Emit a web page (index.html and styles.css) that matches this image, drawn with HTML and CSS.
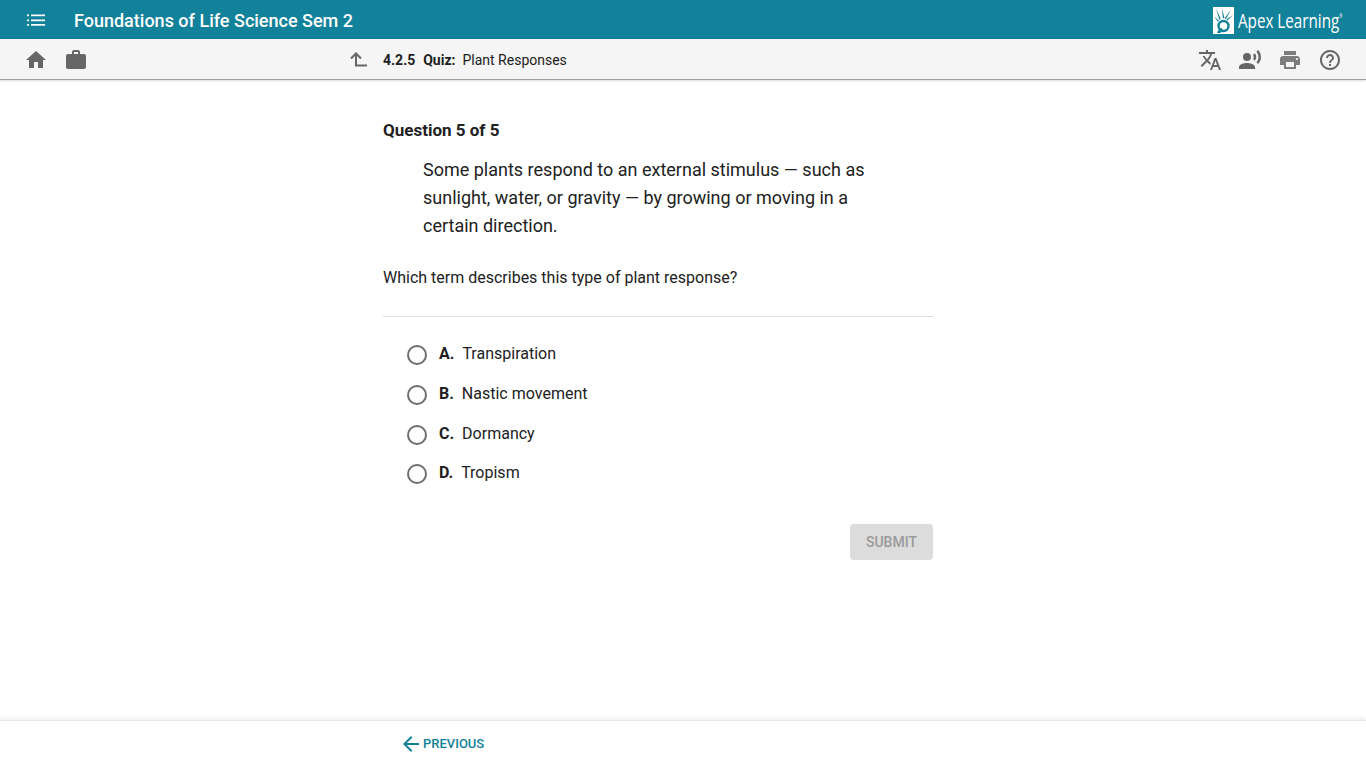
FILE: index.html
```html
<!DOCTYPE html>
<html lang="en">
<head>
  <meta charset="UTF-8" />
  <title>Plant Responses</title>
  <link rel="stylesheet" href="styles.css">
</head>
<body>

  <header class="top-bar">
    <button class="menu-btn" aria-label="Menu">
      <svg width="20" height="20" viewBox="0 0 20 20" fill="#fff">
        <rect x="1" y="4.500" width="2" height="1.700"/><rect x="5" y="4.500" width="14" height="1.700"/>
        <rect x="1" y="9.500" width="2" height="1.700"/><rect x="5" y="9.500" width="14" height="1.700"/>
        <rect x="1" y="14" width="2" height="1.700"/><rect x="5" y="14" width="14" height="1.700"/>
      </svg>
    </button>
    <div class="course-title">Foundations of Life Science Sem 2</div>
    <div class="logo">
      <svg class="logo-mark" width="21" height="27" viewBox="0 0 21 27">
        <rect width="21" height="27" fill="#fff"/>
        <g fill="#12819a">
          <path d="M3 1.500l4.800 10.500-1.500.7z"/>
          <path d="M9 1l2.400 10-1.600.3z"/>
          <path d="M18 2.500l-5 9.500-1.300-.8z"/>
          <path d="M20 8l-5.500 5.500-1-1.200z"/>
          <path d="M1 9.500l5 4-1 1.200z"/>
        </g>
        <circle cx="10.500" cy="19" r="5" fill="none" stroke="#12819a" stroke-width="2.400"/>
        <path d="M4 26c1-3 2.500-4.500 4.500-5l1.500 2-2.500 3z" fill="#12819a"/>
      </svg>
      <span class="logo-text">Apex Learning<sup class="logo-reg">®</sup></span>
    </div>
  </header>

  <nav class="tool-bar">
    <div class="tool-group">
      <a class="tool-icon"><svg width="24" height="24" viewBox="0 0 24 24"><path d="M10 20v-6h4v6h5v-8h3L12 3 2 12h3v8z"/></svg></a>
      <a class="tool-icon"><svg width="24" height="24" viewBox="0 0 24 24"><path d="M20 6h-4V4c0-1.11-.89-2-2-2h-4c-1.11 0-2 .89-2 2v2H4c-1.11 0-1.99.89-1.99 2L2 19c0 1.11.89 2 2 2h16c1.11 0 2-.89 2-2V8c0-1.11-.89-2-2-2zm-6 0h-4V4h4v2z"/></svg></a>
    </div>
    <div class="crumb">
      <svg class="up-icon" width="20" height="20" viewBox="0 0 20 20" fill="none" stroke="#666" stroke-width="2"><path d="M2 8.500L7 3.500l5 5"/><path d="M7 3.500v12h11"/></svg>
      <b>4.2.5</b>
      <b>Quiz:</b>
      <span>Plant Responses</span>
    </div>
    <div class="tool-group">
      <a class="tool-icon"><svg width="24" height="24" viewBox="0 0 24 24"><path d="M12.87 15.07l-2.54-2.51.03-.03c1.74-1.94 2.98-4.17 3.71-6.53H17V4h-7V2H8v2H1v1.99h11.17C11.5 7.92 10.44 9.75 9 11.35 8.07 10.32 7.3 9.19 6.69 8h-2c.73 1.63 1.73 3.17 2.98 4.56l-5.09 5.02L4 19l5-5 3.11 3.11.76-2.04zM18.5 10h-2L12 22h2l1.12-3h4.75L21 22h2l-4.5-12zm-2.62 7l1.62-4.33L19.12 17h-3.24z"/></svg></a>
      <a class="tool-icon"><svg width="24" height="24" viewBox="0 0 24 24"><circle cx="9" cy="9" r="4"/><path d="M9 15c-2.67 0-8 1.34-8 4v2h16v-2c0-2.66-5.33-4-8-4zm7.76-9.64l-1.68 1.69c.84 1.18.84 2.71 0 3.89l1.68 1.69c2.02-2.02 2.02-5.07 0-7.27zM20.07 2l-1.63 1.63c2.77 3.02 2.77 7.56 0 10.74L20.07 16c3.9-3.89 3.91-9.95 0-14z"/></svg></a>
      <a class="tool-icon print-icon"><svg width="24" height="24" viewBox="0 0 24 24"><path d="M19 8H5c-1.66 0-3 1.34-3 3v6h4v4h12v-4h4v-6c0-1.66-1.34-3-3-3zm-3 11H8v-5h8v5zm3-7c-.55 0-1-.45-1-1s.45-1 1-1 1 .45 1 1-.45 1-1 1zm-1-9H6v4h12V3z"/></svg></a>
      <a class="tool-icon"><svg width="24" height="24" viewBox="0 0 24 24"><path d="M11 18h2v-2h-2v2zm1-16C6.48 2 2 6.48 2 12s4.48 10 10 10 10-4.48 10-10S17.52 2 12 2zm0 18c-4.41 0-8-3.59-8-8s3.59-8 8-8 8 3.59 8 8-3.59 8-8 8zm0-14c-2.21 0-4 1.79-4 4h2c0-1.100.9-2 2-2s2 .9 2 2c0 2-3 1.750-3 5h2c0-2.250 3-2.500 3-5 0-2.210-1.790-4-4-4z"/></svg></a>
    </div>
  </nav>

  <main class="quiz">
    <h1 class="question-num">Question 5 of 5</h1>
    <p class="passage">Some plants respond to an external stimulus — such as sunlight, water, or gravity — by growing or moving in a certain direction.</p>
    <p class="prompt">Which term describes this type of plant response?</p>

    <div class="answers">
      <label class="answer"><span class="radio"></span><b>A.</b><span>Transpiration</span></label>
      <label class="answer"><span class="radio"></span><b>B.</b><span>Nastic movement</span></label>
      <label class="answer"><span class="radio"></span><b>C.</b><span>Dormancy</span></label>
      <label class="answer"><span class="radio"></span><b>D.</b><span>Tropism</span></label>
    </div>

    <div class="submit-row">
      <button class="submit-btn" disabled>SUBMIT</button>
    </div>
  </main>

  <footer class="bottom-bar">
    <a class="prev-link">
      <svg width="24" height="24" viewBox="0 0 24 24" fill="#12819a"><path d="M20 11H7.830l5.590-5.590L12 4l-8 8 8 8 1.410-1.410L7.830 13H20v-2z"/></svg>
      PREVIOUS
    </a>
  </footer>

</body>
</html>
```

FILE: styles.css
```css
* {
  box-sizing: border-box;
}

body {
  margin: 0;
  height: 100vh;
  display: flex;
  flex-direction: column;
  overflow: hidden;
  background-color: #fff;
  color: #212121;
  font-family: Roboto, "Liberation Sans", sans-serif;
}

.top-bar {
  height: 39px;
  flex: none;
  display: flex;
  align-items: center;
  padding: 0 24px 0 26px;
  background-color: #12819a;
  color: #fff;
}

.menu-btn {
  width: 20px;
  height: 20px;
  padding: 0;
  margin-right: 28px;
  border: none;
  background: none;
}

.course-title {
  font-size: 18px;
  font-weight: 500;
  flex: 1;
  margin-top: 2px;
}

.logo {
  display: flex;
  align-items: center;
  gap: 4px;
  width: 129px;
  margin-top: 2px;
}

.logo-mark {
  flex: none;
}

.logo-text {
  font-family: "Open Sans", sans-serif;
  font-size: 20px;
  white-space: nowrap;
  transform: scaleX(0.76);
  transform-origin: left center;
}

.logo-reg {
  font-size: 5px;
  vertical-align: 10px;
  line-height: 0;
}

.tool-bar {
  height: 41px;
  flex: none;
  display: flex;
  align-items: center;
  padding: 2px 24px 0;
  background-color: #f5f5f5;
  border-bottom: 1px solid #9e9e9e;
  box-shadow: 0 1px 2px rgba(0, 0, 0, 0.15);
}

.tool-group {
  display: flex;
  gap: 16px;
}

.tool-icon {
  width: 24px;
  height: 24px;
  fill: #666;
}

.print-icon {
  fill: #7c7c7c;
}

.tool-icon svg {
  display: block;
}

.crumb {
  flex: 1;
  display: flex;
  align-items: center;
  margin-left: 261px;
  font-size: 14px;
}

.up-icon {
  margin-right: 14px;
}

.crumb b {
  margin-right: 8px;
  font-weight: 700;
}

.crumb span {
  margin-left: -1px;
}

.quiz {
  flex: 1;
  width: 550px;
  margin-left: 383px;
  padding-top: 39px;
}

.question-num {
  margin: 0;
  font-size: 17px;
  font-weight: 700;
  line-height: 22px;
}

.passage {
  margin: 15px 30px 0 40px;
  font-size: 18px;
  line-height: 28px;
}

.prompt {
  margin: 26px 0 0;
  padding-bottom: 26px;
  font-size: 16px;
  line-height: 24px;
  border-bottom: 1px solid #ddd;
}

.answers {
  margin-top: 25.3px;
  padding-left: 24px;
  display: flex;
  flex-direction: column;
  gap: 15.67px;
}

.answer {
  display: flex;
  height: 24px;
  font-size: 16px;
  line-height: 24px;
}

.answer b {
  margin-right: 8px;
  font-weight: 700;
}

.radio {
  width: 20px;
  height: 20px;
  margin: 3px 12px 0 0;
  border: 2px solid #6e6e6e;
  border-radius: 50%;
}

.submit-row {
  display: flex;
  justify-content: flex-end;
  margin-top: 38.7px;
}

.submit-btn {
  width: 83px;
  height: 36px;
  border: none;
  border-radius: 4px;
  background-color: #dcdcdc;
  color: #9a9a9a;
  font-family: inherit;
  font-size: 14px;
  font-weight: 500;
}

.bottom-bar {
  height: 48px;
  flex: none;
  display: flex;
  align-items: center;
  padding: 0 0 2px 399px;
  border-top: 1px solid #e6e6e6;
  box-shadow: 0 -2px 3px rgba(0, 0, 0, 0.06);
}

.prev-link {
  display: flex;
  align-items: center;
  color: #12819a;
  font-size: 13px;
  font-weight: 500;
}
```
